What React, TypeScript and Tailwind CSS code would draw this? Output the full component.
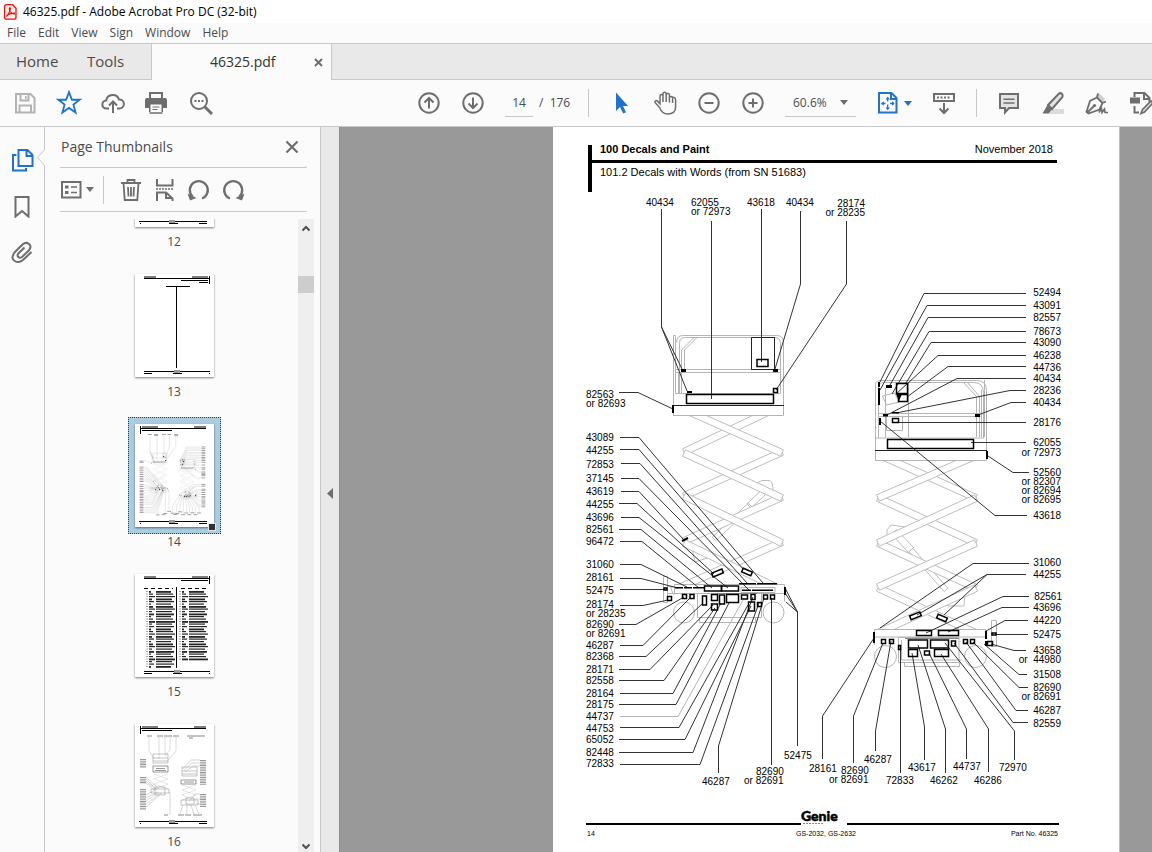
import React from 'react';

type Point = [number, number];

interface Leader {
  pts: Point[];
  light?: boolean;
}

interface Callout {
  text: string;
  x: number;
  y: number;
  end?: boolean;
}

const MENU = ['File', 'Edit', 'View', 'Sign', 'Window', 'Help'];

const at = (x: number, y: number, text: string, end = false): Callout => ({ x, y, text, end });

// Part numbers, y is the text baseline
const CALLOUTS: Callout[] = [
  at(646, 206, '40434'), at(691, 206, '62055'), at(691, 215, 'or 72973'), at(747, 206, '43618'),
  at(786, 206, '40434'), at(865, 207, '28174', true), at(865, 216, 'or 28235', true),
  at(586, 398, '82563'), at(586, 407, 'or 82693'),
  at(586, 441, '43089'), at(586, 454, '44255'), at(586, 468, '72853'), at(586, 482, '37145'),
  at(586, 495, '43619'), at(586, 508, '44255'), at(586, 521, '43696'), at(586, 533, '82561'),
  at(586, 545, '96472'), at(586, 568, '31060'), at(586, 581, '28161'), at(586, 594, '52475'),
  at(586, 608, '28174'), at(586, 617, 'or 28235'), at(586, 628, '82690'), at(586, 637, 'or 82691'),
  at(586, 649, '46287'), at(586, 660, '82368'), at(586, 673, '28171'), at(586, 684, '82558'),
  at(586, 697, '28164'), at(586, 708, '28175'), at(586, 720, '44737'), at(586, 732, '44753'),
  at(586, 743, '65052'), at(586, 756, '82448'), at(586, 767, '72833'),
  at(702, 785, '46287'), at(756, 775, '82690'), at(744, 784, 'or 82691'), at(784, 759, '52475'),
  at(1061, 296, '52494', true), at(1061, 309, '43091', true), at(1061, 321, '82557', true),
  at(1061, 335, '78673', true), at(1061, 346, '43090', true), at(1061, 359, '46238', true),
  at(1061, 371, '44736', true), at(1061, 382, '40434', true), at(1061, 394, '28236', true),
  at(1061, 406, '40434', true), at(1061, 426, '28176', true), at(1061, 446, '62055', true),
  at(1061, 456, 'or 72973', true), at(1061, 476, '52560', true), at(1061, 485, 'or 82307', true),
  at(1061, 494, 'or 82694', true), at(1061, 503, 'or 82695', true), at(1061, 519, '43618', true),
  at(1061, 566, '31060', true), at(1061, 578, '44255', true), at(1062, 600, '82561', true),
  at(1061, 611, '43696', true), at(1061, 624, '44220', true), at(1061, 638, '52475', true),
  at(1061, 654, '43658', true), at(1061, 663, 'or  44980', true), at(1061, 678, '31508', true),
  at(1061, 691, '82690', true), at(1061, 700, 'or 82691', true), at(1061, 714, '46287', true),
  at(1061, 727, '82559', true),
  at(809, 772, '28161'), at(841, 774, '82690'), at(829, 783, 'or 82691'), at(864, 763, '46287'),
  at(886, 784, '72833'), at(908, 771, '43617'), at(930, 784, '46262'), at(953, 770, '44737'),
  at(974, 784, '46286'), at(999, 771, '72970'),
];

const line = (...pts: Point[]): Leader => ({ pts });

const LEADERS: Leader[] = [
  line([661.5, 209], [661.5, 327], [682, 369]),
  line([661.5, 327], [687, 391]),
  line([711.5, 221], [711.5, 399]),
  line([761.5, 209], [761.5, 362]),
  line([800.5, 211], [800.5, 284], [775, 369]),
  line([846.5, 221], [846.5, 284], [776, 390]),
  line([619, 392.5], [638, 392.5], [673, 409]),
  line([620, 437.5], [639, 437.5], [763, 583]),
  line([620, 449.5], [639, 449.5], [743, 569]),
  line([621, 463.5], [640, 463.5], [747, 583]),
  line([621, 478.5], [639, 478.5], [749, 590]),
  line([621, 491.5], [639, 491.5], [684, 540]),
  line([619, 503.5], [637, 503.5], [714, 574]),
  line([621, 517.5], [639, 517.5], [728, 588]),
  line([619, 529.5], [641, 529.5], [712, 588]),
  line([620, 541.5], [642, 541.5], [699, 588]),
  line([620, 564.5], [641, 564.5], [687, 587]),
  line([620, 578.5], [641, 578.5], [678, 588]),
  line([620, 589.5], [665, 589.5]),
  line([620, 605.5], [643, 605.5], [668, 600]),
  line([619, 624.5], [636, 624.5], [684, 597]),
  line([620, 645.5], [643, 645.5], [690, 598]),
  line([619, 656.5], [646, 656.5], [703, 603]),
  line([619, 669.5], [650, 669.5], [713, 605]),
  line([619, 680.5], [664, 680.5], [715, 608]),
  line([620, 693.5], [673, 693.5], [721, 603]),
  line([619, 704.5], [676, 704.5], [729, 603]),
  { pts: [[620, 716.5], [678, 716.5], [743, 600]], light: true },
  line([620, 727.5], [679, 727.5], [748, 605]),
  line([619, 739.5], [685, 739.5], [751, 606]),
  line([619, 752.5], [693, 752.5], [753, 597]),
  line([620, 764.5], [700, 764.5], [759, 603]),
  line([718.5, 773], [718.5, 746], [764, 598]),
  line([771.5, 765], [771.5, 598]),
  line([797.5, 746], [797.5, 612], [785, 588]),
  line([797.5, 612], [785, 593]),
  line([797.5, 612], [786, 602]),
  line([1026, 293.5], [924, 293.5], [880, 382]),
  line([1026, 305.5], [927, 305.5], [880, 390]),
  line([1026, 317.5], [928, 317.5], [890, 385]),
  line([1026, 331.5], [929, 331.5], [892, 394]),
  line([1026, 342.5], [931, 342.5], [906, 383]),
  line([1026, 355.5], [938, 355.5], [896, 394]),
  line([1026, 366.5], [948, 366.5], [907, 397]),
  line([1026, 378.5], [957, 378.5], [887, 415]),
  line([1026, 390.5], [1010, 390.5], [896, 413]),
  line([1026, 402.5], [1011, 402.5], [978, 415]),
  line([1026, 422.5], [895, 422.5]),
  line([1026, 442.5], [971, 442.5]),
  line([1029, 472.5], [1013, 472.5], [988, 456]),
  line([1027, 515.5], [995, 515.5], [880, 421]),
  line([1029, 563.5], [973, 563.5], [880, 628]),
  line([1026, 574.5], [987, 574.5], [917, 615]),
  line([987, 574.5], [944, 615]),
  line([1029, 596.5], [1003, 596.5], [926, 633]),
  line([1029, 607.5], [1002, 607.5], [948, 632]),
  line([1028, 620.5], [1005, 620.5], [986, 631]),
  line([1028, 634.5], [996, 634.5]),
  line([1026, 650.5], [1014, 650.5], [991, 644]),
  line([1027, 674.5], [1019, 674.5], [984, 644]),
  line([1028, 687.5], [1019, 687.5], [973, 642]),
  line([1028, 710.5], [1016, 710.5], [966, 642]),
  line([1028, 722.5], [1013, 722.5], [954, 643]),
  line([1014.5, 760], [1014.5, 731], [945, 643]),
  line([988.5, 772], [988.5, 729], [941, 654]),
  line([966.5, 759], [966.5, 729], [929, 653]),
  line([945.5, 773], [945.5, 729], [918, 645]),
  line([924.5, 760], [924.5, 727], [912, 653]),
  line([900.5, 773], [900.5, 646]),
  line([875.5, 751], [875.5, 731], [891, 641]),
  line([853.5, 763], [853.5, 716], [883, 643]),
  line([822.5, 759], [822.5, 716], [874, 638]),
];

// Outlined decals: x, y, width, height
const DECALS: number[][] = [
  [686.5, 394.5, 87, 9], [757, 359.5, 11, 7], [773.5, 388.5, 4, 4],
  [664, 588, 3, 2], [667.5, 596.5, 4, 4], [682.5, 594.5, 4, 4], [690, 594.5, 4, 4],
  [702.5, 596, 4, 9], [711.5, 594.5, 6, 6], [711.5, 604, 6, 6], [719.5, 595, 5, 9],
  [726.5, 594.5, 12, 8], [741.5, 595, 6, 4], [751, 594.5, 4, 5], [748.5, 602, 6, 9],
  [757.5, 602.5, 4, 4], [763.5, 595, 4, 4], [770.5, 595, 4, 4],
  [704.5, 586, 17, 5], [721.5, 586, 17, 5],
  [887.5, 439.5, 86, 9], [896.5, 383.5, 11, 10], [898.5, 394.5, 9, 7], [892.5, 418.5, 6, 4],
  [916.5, 630.5, 15, 5], [938.5, 630.5, 20, 5], [881.5, 639.5, 4, 4], [889.5, 639.5, 4, 4],
  [898.5, 645.5, 2, 4], [908.5, 640, 19, 8], [930.5, 640, 18, 8], [951.5, 641, 4, 5],
  [908.5, 649.5, 9, 7], [924.5, 651, 5, 4], [934.5, 649.5, 14, 7], [963.5, 639.5, 4, 4],
  [970.5, 639.5, 4, 4], [987.5, 641.5, 5, 4], [992, 633, 4, 2],
];

// Solid decals: x, y, width, height
const MARKS: number[][] = [
  [672, 405, 2, 8], [681, 369, 5, 3], [687, 391, 5, 2], [773, 369, 5, 3],
  [675, 587, 8, 1.5], [684, 587, 8, 1.5], [693, 587, 11, 1.5], [739, 583, 17, 1.5],
  [757, 583, 20, 1.5], [742, 589.5, 9, 1.5], [752, 589.5, 21, 1.5], [784, 587, 2, 8],
  [878, 382, 2, 5], [878, 388, 2, 17], [886, 385, 6, 3], [883, 414, 5, 2.5], [892, 412, 7, 1.5],
  [879, 418, 2, 7], [975, 414, 5, 3], [986, 451, 2, 8], [873, 632, 2, 11], [985, 631, 2, 8],
  [985, 641, 2, 5],
];

// Scissor arms: x1, y1, x2, y2
const ARMS: number[][] = [
  [684, 452, 768, 412], [684, 496, 782, 452], [684, 541, 782, 497], [672, 591, 782, 542],
  [690, 412, 782, 453], [684, 453, 782, 498], [684, 496, 782, 543], [684, 543, 782, 590],
  [884, 457, 976, 498], [878, 498, 976, 543], [878, 543, 976, 588], [878, 588, 978, 634],
  [973, 457, 878, 498], [976, 498, 878, 543], [976, 543, 878, 587], [976, 588, 878, 633],
];

const armPoints = ([x1, y1, x2, y2]: number[], width = 7) => {
  const len = Math.hypot(x2 - x1, y2 - y1);
  const nx = ((y2 - y1) / len) * (width / 2);
  const ny = (-(x2 - x1) / len) * (width / 2);
  return `${x1 + nx},${y1 + ny} ${x2 + nx},${y2 + ny} ${x2 - nx},${y2 - ny} ${x1 - nx},${y1 - ny}`;
};

const LiftDrawing = ({ small = false }: { small?: boolean }) => (
  <>
    <g fill="none" stroke="#bdbdbd">
      {/* hydraulic cylinders */}
      <path d="M757 483l5-2.500 8 0q3 2 3 10" />
      <polygon points={armPoints([766, 490, 749, 506], 6)} />
      <polygon points={armPoints([750, 505, 714, 539], 5)} />
      <path d="M692 548l3 14 18-6" />
      <path d="M887 540v-10l4-5 14 2" />
      <polygon points={armPoints([894, 532, 911, 550], 7)} />
      <polygon points={armPoints([911, 550, 946, 590], 5)} />
      <path d="M940 602l9 4h15l1-12" />
      {ARMS.map((arm, i) => (
        <polygon key={i} points={armPoints(arm)} fill="#fff" />
      ))}
    </g>
    <g fill="#fff" stroke="none">
      <rect x="673" y="405" width="111" height="10" />
      <rect x="875" y="450" width="112" height="10" />
      <rect x="674" y="585" width="111" height="8" />
      <rect x="875" y="630" width="111" height="7" />
    </g>
    <g fill="none" stroke="#b4b4b4">
      {/* left platform */}
      <path d="M673.500 415.500v-80h2v58M673.500 415.500h110v-73q0-7-7-7h-93q-7 0-7 7" />
      <path d="M679.500 393.500v-50q0-6 6-6h89q6 0 6 6v50h-105M675.500 369.500h105M675.500 372.500h105" />
      <path d="M696.500 338l-12 12v19M693.500 338l-12 12v19M678.500 372v21M681.500 372v21" />
      {/* left chassis */}
      <path d="M674.500 584.500h110v17M674.500 584.500v9h110M663.500 576.500h4v26h-4zM667.500 586.500h7v7h-7z" />
      <path d="M697.500 593v24.500h64V593M699.500 618v4.500h56V618M741 587.500h34v5h-34z" />
      <circle cx="684" cy="612.500" r="10.500" />
      <circle cx="773.500" cy="612.500" r="10.500" />
      {/* right platform */}
      <path d="M875.500 460.500v-76q0-4 5-4h96q10 0 10 10v70z" />
      <path d="M878.500 437.500v-50q0-5 5-5h90q10 0 10 10v45.500h-108M878.500 413.500h102M878.500 416.500h102" />
      <path d="M885.500 388v49M908.500 382v55M976.500 397v40M979.500 397v40M981.500 390v47M984.500 380v57" />
      <path d="M963 382l14 15M967 382l13 15M882.500 396l12-3 5 9-13 3zM886.500 416.500h16v14h-16z" />
      {/* right chassis */}
      <path d="M874.500 629.500h111v7.500h-111zM874.500 637v8M991.500 620.500h5v26h-5z" />
      <path d="M898.500 637.500h60.500v25h-60.500zM901.500 640v20h60M904.500 662.500v4h55v-4" />
      <circle cx="885.500" cy="656.500" r="11" />
      <circle cx="975.500" cy="656.500" r="11" />
    </g>
    <g fill="none" stroke="#222">
      <path d="M673 405.500h111M875 450.500h112M751.500 337.500h23v32h-23z" />
      <path d="M717 593.500h40M905 638.500h54" stroke="#888" />
      {LEADERS.map((l, i) => (
        <polyline key={i} points={l.pts.map((p) => p.join(',')).join(' ')} stroke={l.light ? '#b4b4b4' : '#333'} />
      ))}
    </g>
    <g fill="none" stroke="#000" strokeWidth="1.500">
      {DECALS.map(([x, y, w, h], i) => (
        <rect key={i} x={x} y={y} width={w} height={h} />
      ))}
      <rect x="712" y="571" width="11" height="4" transform="rotate(-22 717.500 573)" />
      <rect x="742" y="570" width="10" height="4" transform="rotate(24 747 572)" />
      <rect x="910" y="614" width="11" height="4" transform="rotate(-22 915 616)" />
      <rect x="937" y="616" width="10" height="4" transform="rotate(24 942 618)" />
      <path d="M682 541l6-3" strokeWidth="2" />
    </g>
    <g fill="#000">
      {MARKS.map(([x, y, w, h], i) => (
        <rect key={i} x={x} y={y} width={w} height={h} />
      ))}
      <path d="M896 394h6l-3 7z" />
    </g>
    {small ? (
      <g fill="#777">
        {CALLOUTS.map((c, i) => (
          <rect key={i} x={c.end ? c.x - 30 : c.x} y={c.y - 7} width="28" height="6" />
        ))}
      </g>
    ) : (
      <g fill="#000" fontSize="10" fontFamily="'Liberation Sans', Arial, sans-serif">
        {CALLOUTS.map((c, i) => (
          <text key={i} x={c.x} y={c.y} textAnchor={c.end ? 'end' : 'start'} className="whitespace-pre">{c.text}</text>
        ))}
      </g>
    )}
  </>
);

const Icon = ({ size = 24, children, className = '' }: { size?: number; children: React.ReactNode; className?: string }) => (
  <svg
    width={size}
    height={size}
    viewBox="0 0 24 24"
    fill="none"
    stroke="currentColor"
    strokeWidth="2"
    className={`shrink-0 ${className}`}
    aria-hidden="true"
  >
    {children}
  </svg>
);

const ToolButton = ({ label, children, className = '' }: { label: string; children: React.ReactNode; className?: string }) => (
  <button type="button" aria-label={label} className={`flex h-11 w-11 shrink-0 items-center justify-center ${className}`}>
    {children}
  </button>
);

const Divider = () => <div className="mx-2.5 h-7 w-px shrink-0 bg-[#c8c8c8]" />;

const Caret = ({ className = '' }: { className?: string }) => (
  <svg width="8" height="5" viewBox="0 0 8 5" fill="currentColor" className={`shrink-0 ${className}`} aria-hidden="true">
    <path d="M0 0h8L4 5z" />
  </svg>
);

const TitleBar = () => (
  <header className="flex h-[23px] shrink-0 items-center gap-1.5 bg-white px-1 text-xs text-black">
    <svg width="13" height="16" viewBox="0 0 13 16" fill="none" stroke="#e8140c" aria-hidden="true">
      <path d="M2.500.7h6l3.500 3.500v9q0 2-2 2h-7.500q-2 0-2-2v-10.500q0-2 2-2z" fill="#ffecea" strokeWidth="1.300" />
      <path d="M3 12c1-2 3.500-4.500 3.500-7.500 0-1-1.200-1-1.200 0 0 2.500 2 4.800 4.700 5.500 1 .3 1-.9 0-.9-2 0-5 .9-6.800 2.100-.8.600-.6 1.200-.2.800z" strokeWidth="1.100" />
    </svg>
    <h1>46325.pdf - Adobe Acrobat Pro DC (32-bit)</h1>
  </header>
);

const MenuBar = () => (
  <nav className="flex h-[21px] shrink-0 items-center border-b border-[#c8c8c8] bg-[#fbfbfb] pl-px text-xs text-[#4b4b4b]">
    {MENU.map((item) => (
      <button key={item} type="button" className="px-1.5">{item}</button>
    ))}
  </nav>
);

const TabBar = () => (
  <div className="flex h-9 shrink-0 bg-[#e9e9e9] text-[15px] text-[#4b4b4b]">
    <div className="flex w-[152px] items-center border-r border-b border-[#c8c8c8] pl-4">
      <button type="button" className="w-[71px] text-left">Home</button>
      <button type="button">Tools</button>
    </div>
    <div className="flex w-[180px] items-center justify-end border-r border-[#c8c8c8] bg-[#fbfbfb] pr-2">
      <span className="w-[104px] text-sm text-[#323232]">46325.pdf</span>
      <button type="button" aria-label="Close tab" className="text-[#6e6e6e]">
        <svg width="9" height="9" viewBox="0 0 9 9" stroke="currentColor" strokeWidth="2" aria-hidden="true">
          <path d="M1 1l7 7M8 1l-7 7" />
        </svg>
      </button>
    </div>
    <div className="flex-1 border-b border-[#c8c8c8]" />
  </div>
);

const Toolbar = () => (
  <div className="flex h-[47px] shrink-0 items-center overflow-hidden border-b border-[#c8c8c8] bg-[#fbfbfb] pl-[3px] text-xs text-[#4b4b4b]">
    <ToolButton label="Save" className="text-[#b3b3b3]">
      <Icon>
        <path d="M3 3h14.500L21.500 7v14.500H3zM7.500 3v6.500h8V3M6.500 21.500v-7h11.500v7" />
        <path d="M12.800 5v3" strokeWidth="1.500" />
      </Icon>
    </ToolButton>
    <ToolButton label="Star" className="text-[#1f73cc]">
      <Icon size={26}>
        <path d="M12 2l2.700 7h7l-5.600 4.500 2 7.300L12 16.600l-6.100 4.200 2-7.300L2.300 9h7z" strokeWidth="1.700" />
      </Icon>
    </ToolButton>
    <ToolButton label="Upload" className="text-[#6e6e6e]">
      <Icon>
        <path d="M8 17.500H5.500a4 4 0 0 1-.3-8 6.600 6.600 0 0 1 12.800-1 4.500 4.500 0 0 1 .7 9H16M12 22V11M8 14.500l4-4 4 4" />
      </Icon>
    </ToolButton>
    <ToolButton label="Print" className="text-[#6e6e6e]">
      <Icon>
        <path d="M5 7V2h12v5" />
        <path d="M2 7h18q2 0 2 2v8h-4v4H4v-4H0V9q0-2 2-2z" fill="currentColor" stroke="none" />
        <path d="M5.500 13.500h11V21h-11z" fill="#fff" stroke="none" />
        <path d="M7.500 16h7M7.500 18.500h5" strokeWidth="1.200" />
        <path d="M4.500 22h13" strokeWidth="1.500" />
      </Icon>
    </ToolButton>
    <ToolButton label="Find" className="text-[#6e6e6e]">
      <Icon>
        <circle cx="10" cy="10" r="8" />
        <path d="M16 16l7 7" strokeWidth="3" />
        <path d="M5.500 10h2M9 10h2M12.500 10h2" />
      </Icon>
    </ToolButton>

    <ToolButton label="Previous page" className="ml-[184px] text-[#6e6e6e]">
      <Icon>
        <circle cx="12" cy="12" r="9.700" />
        <path d="M12 17.500V7M7.500 11.500L12 7l4.500 4.500" />
      </Icon>
    </ToolButton>
    <ToolButton label="Next page" className="text-[#6e6e6e]">
      <Icon>
        <circle cx="12" cy="12" r="9.700" />
        <path d="M12 6.500V17M7.500 12.500L12 17l4.500-4.500" />
      </Icon>
    </ToolButton>
    <input
      aria-label="Page number"
      defaultValue="14"
      className="mr-1.5 ml-2.5 h-[27px] w-7 shrink-0 border-b border-[#c8c8c8] bg-transparent text-center"
    />
    <span className="w-[39px] shrink-0 whitespace-pre">/  176</span>
    <Divider />
    <ToolButton label="Select" className="text-[#1f73cc]">
      <Icon>
        <path d="M7 1.500V20l4-4 3.200 6.500 2.800-1.300-3-6.200H19z" fill="currentColor" stroke="none" />
      </Icon>
    </ToolButton>
    <ToolButton label="Hand" className="text-[#6e6e6e]">
      <Icon>
        <path
          d="M6.500 16.500L2.500 12q-1.300-1.500 0-2.200 1-.6 2.200.6l2.300 2.400V5q0-1.600 1.500-1.600T10 5v6V3q0-1.700 1.600-1.700T13.200 3v8-7q0-1.600 1.600-1.600T16.400 4v7.500V7q0-1.500 1.600-1.500T19.600 7 M7 12.800V5M19.600 7h0q0-1 1.500-.6 1.500.3 1.500 2V16q0 7-8 7-5.500 0-8-6.500M19.600 7v5"
          strokeWidth="1.500"
        />
      </Icon>
    </ToolButton>
    <ToolButton label="Zoom out" className="text-[#6e6e6e]">
      <Icon>
        <circle cx="12" cy="12" r="9.700" />
        <path d="M7.500 12h9" />
      </Icon>
    </ToolButton>
    <ToolButton label="Zoom in" className="text-[#6e6e6e]">
      <Icon>
        <circle cx="12" cy="12" r="9.700" />
        <path d="M7.500 12h9M12 7.500v9" />
      </Icon>
    </ToolButton>
    <div className="mx-2.5 flex w-[71px] shrink-0 items-center border-b border-[#c8c8c8] pr-2">
      <select aria-label="Zoom level" className="h-[26px] min-w-0 flex-1 appearance-none bg-transparent pl-2">
        <option>60.6%</option>
      </select>
      <Caret className="text-[#6e6e6e]" />
    </div>
    <button type="button" aria-label="Fit page" className="flex h-11 w-14 shrink-0 items-center justify-center gap-1 text-[#1f73cc]">
      <Icon>
        <path d="M3 2h12.500L20.500 7v14.500H3zM15 2v6h5.500" />
        <path d="M11.700 7v3.500M11.700 13.500V18M5.500 12.500h4M14 12.500h4" strokeWidth="1.300" />
        <path d="M11.700 5.800l2.200 2.700H9.500zM11.700 19.200l2.200-2.700H9.500zM5 12.500l2.700-2.200v4.400zM18.700 12.500L16 10.300v4.400z" fill="currentColor" stroke="none" />
      </Icon>
      <Caret />
    </button>
    <ToolButton label="Scroll mode" className="text-[#6e6e6e]">
      <Icon>
        <path d="M2 3h20v7H2z" />
        <path d="M5 6.500h14" strokeDasharray="2 1.500" />
        <path d="M12 12v9.500M7.500 17.500L12 22l4.500-4.500" />
      </Icon>
    </ToolButton>
    <Divider />
    <ToolButton label="Comment" className="text-[#6e6e6e]">
      <Icon>
        <path d="M3 3h18v14h-9l-4 4.500V17H3z" fill="#e4e4e4" />
        <path d="M6.500 8.200h11M6.500 12h11" strokeWidth="1.400" />
      </Icon>
    </ToolButton>
    <ToolButton label="Highlight" className="text-[#6e6e6e]">
      <Icon>
        <path d="M12 18h11v5H6z" fill="#dcdcdc" stroke="none" />
        <path d="M7 14L18 2.500q1.500-1 3 .5t.5 3L11 18z" fill="#e4e4e4" />
        <path d="M1.500 22.500l5-8.500 4.500 4.500-3.500 4z" fill="currentColor" stroke="none" />
      </Icon>
    </ToolButton>
    <ToolButton label="Sign" className="text-[#6e6e6e]">
      <Icon>
        <path d="M14 2l6 6-2 3-7-6z" fill="#d0d0d0" stroke="none" />
        <path d="M13 2.500l-1 4-7 3.500-3.500 11 2 1.500 11-4 3-6.500 3.500-1.500M12 6.500l5.500 5.500M2 22l7-7" strokeWidth="1.800" />
        <circle cx="9.500" cy="14.500" r="1.600" fill="currentColor" stroke="none" />
        <path d="M14 21.500l2.500-4 .5 4 2.500-3.500.500 3.500h3" strokeWidth="1.600" />
      </Icon>
    </ToolButton>
    <ToolButton label="Organize" className="text-[#6e6e6e]">
      <Icon>
        <path d="M5.500 6V2h10l5 5v4M15 2v6h5.500M5.500 15v6.500H10" />
        <path d="M1 6.500h10v6H1z" fill="currentColor" stroke="none" />
        <path d="M12 22.500l1.500-4L22 10l2 2-8.500 9z" fill="#ddd" strokeWidth="1.700" />
      </Icon>
    </ToolButton>
  </div>
);

const SideRail = () => (
  <aside className="relative flex w-[45px] shrink-0 flex-col items-center gap-[22px] border-r border-[#c8c8c8] bg-[#fbfbfb] pt-[21px]">
    <button type="button" aria-label="Page thumbnails" className="text-[#1f73cc]">
      <Icon>
        <path d="M8.500 2h9L22.500 7v11h-14zM16.500 2v6h6M6.500 7H3v15.500h13V20" />
      </Icon>
    </button>
    <button type="button" aria-label="Bookmarks" className="text-[#6e6e6e]">
      <Icon>
        <path d="M5.500 3h13v19.500L12 17l-6.500 5.500z" />
      </Icon>
    </button>
    <button type="button" aria-label="Attachments" className="text-[#6e6e6e]">
      <Icon>
        <path d="M21.500 12l-8.500 8q-4 3.500-8.300 1T4.500 12.500l8-8q3.500-3 6.500-.500t0 6.200l-7 6.800q-2.200 1.500-3.700 0t0-3.500l6.200-6" />
      </Icon>
    </button>
    <svg width="8" height="17" viewBox="0 0 8 17" className="absolute top-[22px] -right-px" fill="#fbfbfb" stroke="#c8c8c8" aria-hidden="true">
      <path d="M8 0L.5 8.500 8 17" />
    </svg>
  </aside>
);

const bars = (count: number, x: number, base: number) =>
  Array.from({ length: count }, (_, i) => (
    <rect key={i} x={x} y={17 + i * 2.5} width={base + ((i * 7) % 5) - 2} height={i % 3 ? 1.2 : 1.8} />
  ));

const ThumbFrame = ({ flip = false }: { flip?: boolean }) => (
  <g fill="#000">
    {flip ? (
      <>
        <path d="M9 4h66v1H9zM74 2h1v8h-1zM9 2.500h12v1H9zM57 2.500h16v1H57zM46 6h27v1H46z" />
        <path d="M9 97h66v1H9zM9 99h8v1H9zM38 99h9v1h-9zM74 99h1v1h-1z" />
      </>
    ) : (
      <>
        <path d="M5 4h66v1H5zM5 2h1v8H5zM7 2.500h16v1H7zM59 2.500h12v1H59zM7 6h30v1H7z" />
        <path d="M4 97h68v1H4zM5 99h1v1H5zM34 99h9v1h-9zM64 99h8v1h-8z" />
      </>
    )}
    <rect x={flip ? 39 : 34} y="96" width="6" height="3" fill="#999" />
  </g>
);

const ThumbContent = ({ page }: { page: number }) => {
  if (page === 13) {
    return (
      <g>
        <path d="M31 12h24v1H31zM41 13h1v81h-1zM64 8h9v1h-9z" />
      </g>
    );
  }
  if (page === 15) {
    return (
      <g>
        <path d="M41 13h1v81h-1z" />
        <path d="M9 14.500h29M46 14.500h28" stroke="#000" strokeDasharray="4 3" />
        <g opacity=".85">
          {bars(31, 21, 17)}
          {bars(28, 54, 17)}
          {bars(31, 14, 4)}
          {bars(28, 47, 4)}
        </g>
        <path d="M12 17v76M45 17v70" stroke="#555" strokeDasharray="1 1.500" />
      </g>
    );
  }
  if (page === 16) {
    return (
      <g fill="none" stroke="#888" strokeWidth=".5">
        <path d="M14 13v14l5 8M24 13v22M30 13v18M35 13v13l-5 6M41 13v14l-8 9" stroke="#bbb" />
        <path d="M18 30h15v9H18zM18 34h15M47 43h15v9H47zM47 47h15M18 37h15M47 50h15" />
        <path d="M18 42h15v6H18zM46 56h15v4H46z" stroke="#333" />
        <path d="M21 44.500h9M20 46.500h11M49 58h10" stroke="#333" />
        <path d="M19 50l14 5-14 5 14 5M33 50l-14 5 14 5-14 5M47 61l14 5-14 5 14 5M61 61l-14 5 14 5-14 5" stroke="#ccc" />
        <path d="M16 65h18v4H16zM46 76h17v5H46zM51 74h8v6h-8zM20 63h10v8H20z" />
        <path d="M11 53l13 12M11 55l11 11M11 57l10 9M11 59l8 7M11 71l9-5M11 74l11-6M11 77l13-9M11 80l15-11M11 83l16-14M35 68v23M48 81l-3 9M52 81v9M56 81l3 9M60 81l4 9M65 36h-9l-8 9M65 39h-8l-8 7M65 42h-7l-8 6M65 70h-5l-6 8M65 75h-4M65 80h-4" stroke="#aaa" />
        <path d="M8 53v7M8 65v21M8 35v9M68 36v25M68 70v13" stroke="#999" strokeWidth="6" strokeDasharray="1 .7" />
        <path d="M12 12h5M22 12h6M29 12h8M38 12h6M52 12h18M54 14h4M29 91h4M43 91h6M50 91h6M58 91h9" strokeWidth="1" />
      </g>
    );
  }
  if (page === 14) {
    return (
      <g transform="scale(.139)">
        <g transform="translate(-553 -127)" opacity=".8">
          <LiftDrawing small />
        </g>
      </g>
    );
  }
  return null;
};

const Thumbnail = ({ page, selected }: { page: number; selected: boolean }) => (
  <li className="mb-[17px] flex flex-col items-center">
    <button
      type="button"
      aria-current={selected ? 'page' : undefined}
      className={`relative border p-1.5 ${selected ? 'border-dotted border-[#5b2a1a] bg-[#abcde1]' : 'border-transparent'}`}
    >
      <svg width="79" height="103" viewBox="0 0 79 103" className="bg-white shadow-[0_1px_2px_rgba(0,0,0,0.5)]" role="img" aria-label={`Page ${page}`}>
        <ThumbFrame flip={page === 13 || page === 15} />
        <ThumbContent page={page} />
      </svg>
      {selected && <span className="absolute right-1 bottom-0.5 size-2 border border-[#e4e4e4] bg-[#323232]" />}
    </button>
    <span className="text-xs leading-4">{page}</span>
  </li>
);

const ThumbnailPanel = () => (
  <section className="flex w-[276px] shrink-0 flex-col border-r border-[#c8c8c8] bg-[#fbfbfb] text-[#4b4b4b]">
    <div className="mr-[13px] ml-[15px] flex h-[41px] items-center justify-between border-b border-[#c8c8c8] pr-2 pl-px">
      <h2 className="text-sm">Page Thumbnails</h2>
      <button type="button" aria-label="Close panel" className="text-[#6e6e6e]">
        <svg width="14" height="14" viewBox="0 0 14 14" stroke="currentColor" strokeWidth="2.200" aria-hidden="true">
          <path d="M1.500 1.500l11 11M12.500 1.500l-11 11" />
        </svg>
      </button>
    </div>
    <div className="mr-[13px] ml-[15px] flex h-11 shrink-0 items-center border-b border-[#c8c8c8] text-[#6e6e6e]">
      <button type="button" aria-label="Options" className="flex items-center gap-0.5">
        <Icon>
          <path d="M2 4h18.500v15.500H2z" />
          <path d="M5 9h3.500M5 14.500h3.500" strokeWidth="3" />
          <path d="M11 9h6M11 14.500h6" strokeWidth="1.600" />
        </Icon>
        <Caret />
      </button>
      <div className="mr-2 ml-[9px] h-7 w-px bg-[#c8c8c8]" />
      <div className="flex items-center gap-2.5 pl-[7px]">
        <button type="button" aria-label="Delete pages">
          <Icon>
            <path d="M2 5h20M8.500 4.500V2h7v2.500M4.500 5l1.200 17h12.600L19.500 5M9 9l.5 9.500M12 9v9.500M15 9l-.5 9.500" strokeWidth="1.800" />
          </Icon>
        </button>
        <button type="button" aria-label="Split document">
          <Icon>
            <path d="M4 1v6.500h15.500V1M4 23v-8.500h9l6.500 6V23M13 14.500V20h6.500" />
            <path d="M3 11h18" strokeDasharray="2 1" strokeWidth="1.400" />
          </Icon>
        </button>
        <button type="button" aria-label="Rotate left">
          <Icon>
            <path d="M5.500 18.500A9 9 0 1 1 15 20.500" strokeWidth="2.300" />
            <path d="M.500 15.500l2.500 7 6.500-2.500z" fill="currentColor" stroke="none" />
          </Icon>
        </button>
        <button type="button" aria-label="Rotate right">
          <Icon>
            <path d="M18.500 18.500A9 9 0 1 0 9 20.500" strokeWidth="2.300" />
            <path d="M23.500 15.500l-2.500 7-6.500-2.500z" fill="currentColor" stroke="none" />
          </Icon>
        </button>
      </div>
    </div>
    <div className="mt-[7px] flex min-h-0 flex-1 pr-1.5">
      <div className="flex-1 overflow-hidden pl-[5px]">
        <ul className="-mt-[102px]">
          {[12, 13, 14, 15, 16].map((page) => (
            <Thumbnail key={page} page={page} selected={page === 14} />
          ))}
        </ul>
      </div>
      <div className="flex w-4 flex-col items-center bg-[#efefef] py-1.5 text-[#505050]">
        <svg width="8" height="7" viewBox="0 0 8 7" fill="none" stroke="currentColor" strokeWidth="2" aria-hidden="true">
          <path d="M.5 5.500L4 2l3.500 3.500" />
        </svg>
        <div className="mt-11 h-[17px] w-full bg-[#cdcdcd]" />
        <svg width="8" height="7" viewBox="0 0 8 7" fill="none" stroke="currentColor" strokeWidth="2" className="mt-auto -mb-1" aria-hidden="true">
          <path d="M.5 1.500L4 5l3.500-3.500" />
        </svg>
      </div>
    </div>
  </section>
);

const DocumentPage = () => (
  <article className="ml-[213px] flex w-[567px] shrink-0 flex-col border-r border-[#c0c0c0] bg-white font-['Liberation_Sans',Arial,sans-serif] text-[11px] text-black">
    <div className="mt-[18px] mr-[62px] ml-[35px] h-[47px] border-l-4 border-black">
      <div className="flex h-[18px] items-start justify-between border-b-[3px] border-black pr-1 pl-2 leading-[9px]">
        <h2 className="font-bold">100 Decals and Paint</h2>
        <span>November 2018</span>
      </div>
      <h3 className="pt-[3px] pl-2 leading-3">101.2 Decals with Words (from SN 51683)</h3>
    </div>
    <svg viewBox="553 192 566 616" className="w-full" role="img" aria-label="Decal locations">
      <LiftDrawing />
    </svg>
    <footer className="mr-[60px] ml-[33px]">
      <div className="flex items-end">
        <div className="h-0.5 w-[215px] bg-black" />
        <svg width="38" height="17" viewBox="0 0 38 17" aria-label="Genie" role="img">
          <text x="0" y="13" fontSize="14" fontWeight="900" fontFamily="Lato, sans-serif" stroke="#000" strokeWidth=".5">Genie</text>
          <path d="M2 15.500h20" stroke="#888" strokeDasharray="2 1" />
        </svg>
        <div className="ml-2 h-0.5 flex-1 bg-black" />
      </div>
      <div className="mt-[3px] flex px-px text-[7px] leading-3">
        <span className="w-[209px]">14</span>
        <span className="flex-1">GS-2032, GS-2632</span>
        <span>Part No. 46325</span>
      </div>
    </footer>
  </article>
);

export default function App() {
  return (
    <div className="flex h-screen flex-col overflow-hidden bg-[#fbfbfb] font-['Open_Sans','Noto_Sans',sans-serif]">
      <TitleBar />
      <MenuBar />
      <TabBar />
      <Toolbar />
      <main className="flex min-h-0 flex-1">
        <SideRail />
        <ThumbnailPanel />
        <button
          type="button"
          aria-label="Collapse panel"
          className="flex w-[19px] shrink-0 items-center justify-center border-r border-[#8c8c8c] bg-[#e9e9e9] pt-2 text-[#6e6e6e]"
        >
          <svg width="6" height="11" viewBox="0 0 6 11" fill="currentColor" aria-hidden="true">
            <path d="M6 0v11L0 5.500z" />
          </svg>
        </button>
        <div className="flex min-w-0 flex-1 overflow-hidden bg-[#999999]">
          <DocumentPage />
        </div>
      </main>
    </div>
  );
}
